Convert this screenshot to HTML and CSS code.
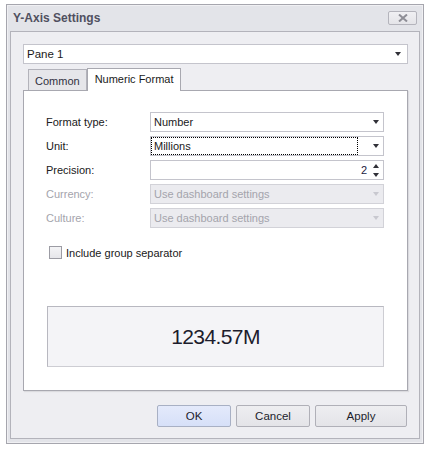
FILE: index.html
```html
<!DOCTYPE html>
<html>
<head>
<meta charset="utf-8">
<link rel="stylesheet" href="styles.css">
</head>
<body>
<div class="window">
  <div class="titlebar">
    <span class="title">Y-Axis Settings</span>
    <span class="close"><svg width="10" height="8" viewBox="0 0 10 8"><path d="M1 0.5 L9 7.5 M9 0.5 L1 7.5" stroke="#8e8e96" stroke-width="2"/></svg></span>
  </div>
  <div class="client">
    <div class="combo pane"><span class="val">Pane 1</span><span class="arrow"></span></div>
    <div class="tabs">
      <div class="tab">Common</div>
      <div class="tab active">Numeric Format</div>
    </div>
    <div class="panel">
      <div class="rows">
        <div class="row"><span class="lbl">Format type:</span><div class="combo field"><span class="val">Number</span><span class="arrow"></span></div></div>
        <div class="row"><span class="lbl">Unit:</span><div class="combo field"><span class="val focus">Millions</span><span class="arrow"></span></div></div>
        <div class="row"><span class="lbl">Precision:</span><div class="combo field spin"><span class="val num">2</span><span class="spinbtn"><span class="up"></span><span class="down"></span></span></div></div>
        <div class="row dis"><span class="lbl">Currency:</span><div class="combo field disabled"><span class="val">Use dashboard settings</span><span class="arrow"></span></div></div>
        <div class="row dis"><span class="lbl">Culture:</span><div class="combo field disabled"><span class="val">Use dashboard settings</span><span class="arrow"></span></div></div>
      </div>
      <label class="check"><span class="box"></span>Include group separator</label>
      <div class="preview">1234.57M</div>
    </div>
    <div class="buttons">
      <div class="btn ok">OK</div>
      <div class="btn">Cancel</div>
      <div class="btn apply">Apply</div>
    </div>
  </div>
</div>
</body>
</html>
```
FILE: styles.css
```css
* { box-sizing: border-box; }
html, body { margin: 0; padding: 0; background: #ffffff; }
body {
  font-family: "Liberation Sans", Arial, sans-serif;
  font-size: 11px;
  color: #202020;
}
.window {
  margin: 4px 0 0 6px;
  width: 418px;
  height: 440px;
  background: #e3e4e9;
  border: 1px solid #a6a6ae;
  box-shadow: inset 0 0 0 1px #f0f0f3;
  display: flex;
  flex-direction: column;
  padding: 0 3px 4px 3px;
}
.titlebar {
  height: 26px;
  display: flex;
  align-items: center;
  justify-content: space-between;
  padding: 0 3px 0 3px;
}
.title {
  font-weight: bold;
  font-size: 12px;
  color: #505060;
}
.close {
  width: 29px;
  height: 14px;
  border: 1px solid #b4b4bc;
  border-radius: 2px;
  background: linear-gradient(#f0f0f3, #e4e4e8);
  display: flex;
  align-items: center;
  justify-content: center;
  margin-top: -1px;
}
.client {
  flex: 1;
  background: #eeeef2;
  border: 1px solid #b3b3bb;
  padding: 12px 11px 0 12px;
  display: flex;
  flex-direction: column;
}
.combo {
  height: 20px;
  background: #fff;
  border: 1px solid #c4c4cc;
  display: flex;
  align-items: center;
  position: relative;
}
.combo .val {
  flex: 1;
  padding-left: 3px;
  font-size: 11px;
  color: #1a1a1a;
  line-height: 16px;
}
.arrow {
  width: 0;
  height: 0;
  border-left: 3.5px solid transparent;
  border-right: 3.5px solid transparent;
  border-top: 4px solid #303038;
  margin: 0 4px 0 6px;
}
.pane .arrow { margin-right: 6px; }
.pane .val { font-size: 11.5px; }
.tabs {
  display: flex;
  align-items: flex-end;
  margin-top: 3px;
  height: 23px;
  padding-left: 5px;
}
.tab {
  height: 21px;
  padding: 2px 6px 0 6px;
  border: 1px solid #b3b3bb;
  border-bottom: none;
  background: #e6e6ea;
  font-size: 11px;
  color: #303040;
  display: flex;
  align-items: center;
}
.tab.active {
  height: 23px;
  background: #fff;
  border-color: #a8a8b0;
  margin-bottom: -1px;
  position: relative;
  z-index: 1;
  padding: 0 7px 2px 7px;
  color: #1a1a1a;
}
.panel {
  height: 301px;
  background: #fff;
  border: 1px solid #a8a8b0;
  box-shadow: 1px 1px 1px rgba(0,0,0,0.08);
  padding: 21px 23px 0 22px;
  display: flex;
  flex-direction: column;
}
.rows {
  display: flex;
  flex-direction: column;
  gap: 4px;
}
.row {
  display: flex;
  align-items: center;
}
.lbl {
  width: 104px;
  font-size: 11px;
  color: #202020;
}
.field { flex: 1; }
.focus {
  outline: 1px dotted #000;
  outline-offset: 0;
  margin: 0 10px 0 1px;
  padding-left: 2px !important;
}
.num {
  text-align: right;
  padding-right: 6px;
  color: #1a1a40 !important;
}
.spinbtn {
  display: flex;
  flex-direction: column;
  gap: 5px;
  margin-right: 4px;
}
.up, .down {
  width: 0;
  height: 0;
  border-left: 3.5px solid transparent;
  border-right: 3.5px solid transparent;
}
.up { border-bottom: 4px solid #303038; }
.down { border-top: 4px solid #303038; }
.dis .lbl { color: #a4a4ac; }
.disabled {
  background: #ebebef;
  border-color: #d2d2d8;
}
.disabled .val { color: #a4a4ac; }
.disabled .arrow { border-top-color: #c8c8cf; }
.check {
  display: flex;
  align-items: center;
  margin-top: 18px;
  margin-left: 3px;
  font-size: 11px;
  color: #202020;
}
.box {
  width: 13px;
  height: 13px;
  border: 1px solid #9c9ca4;
  background: linear-gradient(#f4f4f6, #e6e6ea);
  margin-right: 4px;
}
.preview {
  margin-top: 47px;
  margin-left: 1px;
  height: 61px;
  background: #f4f4f7;
  border: 1px solid #cdcdd3;
  border-top-color: #b8b8c0;
  border-left-color: #b8b8c0;
  display: flex;
  align-items: center;
  justify-content: center;
  font-size: 21px;
  color: #1c1c2c;
  letter-spacing: -0.6px;
}
.buttons {
  display: flex;
  justify-content: flex-end;
  gap: 5px;
  margin-top: 14px;
  padding-right: 1px;
}
.btn {
  width: 74px;
  height: 22px;
  border: 1px solid #b0b0b8;
  border-radius: 2px;
  background: linear-gradient(#eeeef1, #e4e4e8);
  display: flex;
  align-items: center;
  justify-content: center;
  font-size: 11.5px;
  color: #1c1c2c;
}
.btn.ok {
  background: linear-gradient(#e4eafb, #d6e0f8);
  border-color: #a8b0c4;
}
.btn.apply { width: 92px; }
```
